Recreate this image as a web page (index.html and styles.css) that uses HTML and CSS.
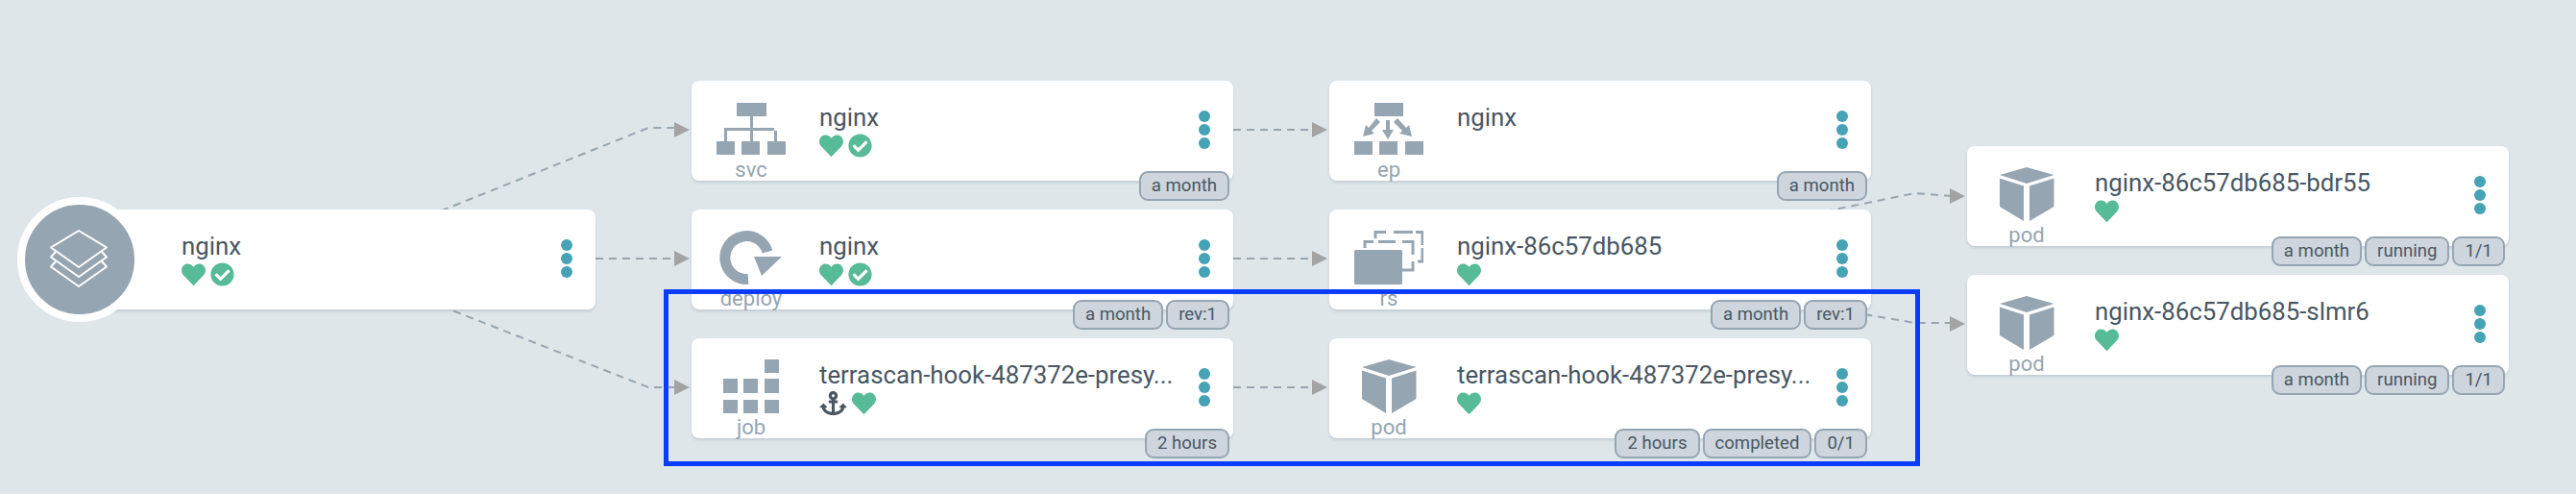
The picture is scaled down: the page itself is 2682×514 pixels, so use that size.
FILE: index.html
```html
<!DOCTYPE html>
<html>
<head>
<meta charset="utf-8">
<title>nginx resource tree</title>
<link rel="stylesheet" href="styles.css">
</head>
<body>
<svg class="defs" width="0" height="0">
  <symbol id="heart" viewBox="0 0 512 512"><path d="M462.3 62.6C407.5 15.9 326 24.3 275.7 76.2L256 96.5l-19.7-20.3C186.1 24.3 104.5 15.9 49.7 62.6c-62.8 53.6-66.1 149.8-9.9 207.9L256 496l216.1-225.5c56.3-58.1 53-154.3-9.8-207.9z"/></symbol>
  <symbol id="check" viewBox="0 0 512 512"><path d="M504 256c0 136.967-111.033 248-248 248S8 392.967 8 256 119.033 8 256 8s248 111.033 248 248zM227.314 387.314l184-184c6.248-6.248 6.248-16.379 0-22.627l-22.627-22.627c-6.248-6.249-16.379-6.249-22.628 0L216 308.118l-70.059-70.059c-6.248-6.248-16.379-6.248-22.628 0l-22.627 22.627c-6.248 6.248-6.248 16.379 0 22.627l104 104c6.249 6.249 16.379 6.249 22.628 0z"/></symbol>
  <symbol id="anchor" viewBox="0 0 576 512"><path d="M12.971 352h32.394C67.172 454.735 181.944 512 288 512c106.229 0 220.853-57.38 242.635-160h32.394c10.691 0 16.045-12.926 8.485-20.485l-67.029-67.029c-4.686-4.686-12.284-4.686-16.971 0l-67.029 67.029c-7.56 7.56-2.206 20.485 8.485 20.485h35.146c-20.29 54.317-84.963 86.588-144.117 94.015V256h52c6.627 0 12-5.373 12-12v-40c0-6.627-5.373-12-12-12h-52v-5.47c37.281-13.178 63.995-48.725 64-90.518C384.005 43.772 341.312.611 289.094.01 235.74-.605 192 42.711 192 96c0 41.798 26.716 77.35 64 90.53V192h-52c-6.627 0-12 5.373-12 12v40c0 6.627 5.373 12 12 12h52v190.015c-58.936-7.399-123.82-39.679-144.117-94.015h35.146c10.691 0 16.045-12.926 8.485-20.485l-67.029-67.029c-4.686-4.686-12.284-4.686-16.971 0L4.485 331.515C-3.074 339.074 2.28 352 12.971 352zM288 64c17.645 0 32 14.355 32 32s-14.355 32-32 32-32-14.355-32-32 14.355-32 32-32z"/></symbol>
  <symbol id="pod" viewBox="0 0 72 56"><path d="M36 0L64.5 8 36 17 8 8zM8 11.500L33 19.500V56L8 41zM64.500 11.500L39 19.500V56L64.500 41z"/></symbol>
</svg>

<div class="canvas">
  <svg class="edges" width="2682" height="514">
    <path d="M420 235L675 133H704"/>
    <path d="M620 269H704"/>
    <path d="M420 303L675 403H704"/>
    <path d="M1284 135H1368"/>
    <path d="M1284 269H1368"/>
    <path d="M1284 403H1368"/>
    <path d="M1900 220L1994 201L2032 204"/>
    <path d="M1900 320L1994 336H2032"/>
    <polygon points="702,127 718,135 702,143"/>
    <polygon points="702,261 718,269 702,277"/>
    <polygon points="702,395 718,403 702,411"/>
    <polygon points="1366,127 1382,135 1366,143"/>
    <polygon points="1366,261 1382,269 1366,277"/>
    <polygon points="1366,395 1382,403 1366,411"/>
    <polygon points="2030,196 2046,204 2030,212"/>
    <polygon points="2030,329 2046,337 2030,345"/>
  </svg>

  <div class="node at-root">
    <div class="kind"></div>
    <div class="info">
      <div class="name">nginx</div>
      <div class="status">
        <svg class="ico"><use href="#heart"/></svg>
        <svg class="ico"><use href="#check"/></svg>
      </div>
    </div>
    <div class="dots"><i></i><i></i><i></i></div>
    <div class="app-icon">
      <svg width="114" height="114" viewBox="0 0 114 114">
        <path d="M56 27L85 44.500 56 65 27 44.500z"/>
        <path d="M32 49L27 54.500 56 75 85 54.500 80 49"/>
        <path d="M32 59L27 64.500 56 85 85 64.500 80 59"/>
      </svg>
    </div>
  </div>

  <div class="node at-svc">
    <div class="kind">
      <svg class="glyph" viewBox="0 0 72 56">
        <path d="M21 1H52V15H21zM35 15H38V27H60V27 30H63V41H60V30H38V41H35V30H11V41H8V27H35zM0 41H19V55H0zM26 41H45V55H26zM53 41H72V55H53z"/>
      </svg>
      <div class="label">svc</div>
    </div>
    <div class="info">
      <div class="name">nginx</div>
      <div class="status">
        <svg class="ico"><use href="#heart"/></svg>
        <svg class="ico"><use href="#check"/></svg>
      </div>
    </div>
    <div class="dots"><i></i><i></i><i></i></div>
    <div class="tags"><span>a month</span></div>
  </div>

  <div class="node at-deploy">
    <div class="kind">
      <svg class="glyph" viewBox="0 0 72 56">
        <path class="ring" d="M33 50.500A22.500 22.500 0 1 1 53 22"/>
        <path d="M39 27H68L47 47z"/>
      </svg>
      <div class="label">deploy</div>
    </div>
    <div class="info">
      <div class="name">nginx</div>
      <div class="status">
        <svg class="ico"><use href="#heart"/></svg>
        <svg class="ico"><use href="#check"/></svg>
      </div>
    </div>
    <div class="dots"><i></i><i></i><i></i></div>
    <div class="tags"><span>a month</span><span>rev:1</span></div>
  </div>

  <div class="node at-job">
    <div class="kind">
      <svg class="glyph" viewBox="0 0 72 56">
        <path d="M50 0H65V14H50zM7 20H22V35H7zM28 20H43V35H28zM50 20H65V35H50zM7 42H22V56H7zM28 42H43V56H28zM50 42H65V56H50z"/>
      </svg>
      <div class="label">job</div>
    </div>
    <div class="info">
      <div class="name">terrascan-hook-487372e-presy...</div>
      <div class="status">
        <svg class="ico anchor"><use href="#anchor"/></svg>
        <svg class="ico"><use href="#heart"/></svg>
      </div>
    </div>
    <div class="dots"><i></i><i></i><i></i></div>
    <div class="tags"><span>2 hours</span></div>
  </div>

  <div class="node at-ep">
    <div class="kind">
      <svg class="glyph" viewBox="0 0 72 56">
        <path d="M21 1H51V15H21zM0 41H19V55H0zM26 41H45V55H26zM53 41H72V55H53z"/>
        <path d="M33 19H37V29H41L35 39 29 29H33zM23 17L27 21 18 30 21 33 9 36 12 24 15 27zM45 17L41 21 50 30 47 33 60 36 57 24 54 27z"/>
      </svg>
      <div class="label">ep</div>
    </div>
    <div class="info">
      <div class="name">nginx</div>
    </div>
    <div class="dots"><i></i><i></i><i></i></div>
    <div class="tags"><span>a month</span></div>
  </div>

  <div class="node at-rs">
    <div class="kind">
      <svg class="glyph" viewBox="0 0 72 56">
        <rect x="0" y="20" width="50" height="36" rx="1.500"/>
        <path d="M11 18V11.500H20M25 11.500H43M50 11.500H61V25M61 32V41H50"/>
        <path d="M22 8V1.500H33M41 1.500H61M64 1.500H71V15M71 18V32H66"/>
      </svg>
      <div class="label">rs</div>
    </div>
    <div class="info">
      <div class="name">nginx-86c57db685</div>
      <div class="status"><svg class="ico"><use href="#heart"/></svg></div>
    </div>
    <div class="dots"><i></i><i></i><i></i></div>
    <div class="tags"><span>a month</span><span>rev:1</span></div>
  </div>

  <div class="node at-hookpod">
    <div class="kind">
      <svg class="glyph"><use href="#pod"/></svg>
      <div class="label">pod</div>
    </div>
    <div class="info">
      <div class="name">terrascan-hook-487372e-presy...</div>
      <div class="status"><svg class="ico"><use href="#heart"/></svg></div>
    </div>
    <div class="dots"><i></i><i></i><i></i></div>
    <div class="tags"><span>2 hours</span><span>completed</span><span>0/1</span></div>
  </div>

  <div class="node at-pod1">
    <div class="kind">
      <svg class="glyph"><use href="#pod"/></svg>
      <div class="label">pod</div>
    </div>
    <div class="info">
      <div class="name">nginx-86c57db685-bdr55</div>
      <div class="status"><svg class="ico"><use href="#heart"/></svg></div>
    </div>
    <div class="dots"><i></i><i></i><i></i></div>
    <div class="tags"><span>a month</span><span>running</span><span>1/1</span></div>
  </div>

  <div class="node at-pod2">
    <div class="kind">
      <svg class="glyph"><use href="#pod"/></svg>
      <div class="label">pod</div>
    </div>
    <div class="info">
      <div class="name">nginx-86c57db685-slmr6</div>
      <div class="status"><svg class="ico"><use href="#heart"/></svg></div>
    </div>
    <div class="dots"><i></i><i></i><i></i></div>
    <div class="tags"><span>a month</span><span>running</span><span>1/1</span></div>
  </div>

  <div class="highlight"></div>
</div>
</body>
</html>
```

FILE: styles.css
```css
body {
  margin: 0;
  background: #dee6ea;
  font-family: Roboto, "Liberation Sans", sans-serif;
  overflow: hidden;
}

.defs {
  position: absolute;
}

.canvas {
  position: relative;
  width: 2682px;
  height: 514px;
}

.edges {
  position: absolute;
  left: 0;
  top: 0;
}

.edges path {
  fill: none;
  stroke: #98a5b0;
  stroke-width: 2;
  stroke-dasharray: 8 6;
}

.edges polygon {
  fill: #a3a3a3;
}

/* nodes sit on the graph canvas */
.node {
  position: absolute;
  display: flex;
  width: 564px;
  height: 104px;
  background: #fff;
  border-radius: 8px;
  box-shadow: 0 2px 3px rgba(70, 90, 110, .18);
}

.at-root { left: 56px; top: 218px; }
.at-svc { left: 720px; top: 84px; }
.at-deploy { left: 720px; top: 218px; }
.at-job { left: 720px; top: 352px; }
.at-ep { left: 1384px; top: 84px; }
.at-rs { left: 1384px; top: 218px; }
.at-hookpod { left: 1384px; top: 352px; }
.at-pod1 { left: 2048px; top: 152px; }
.at-pod2 { left: 2048px; top: 286px; }

.kind {
  flex: none;
  width: 124px;
  padding-top: 22px;
  text-align: center;
  box-sizing: border-box;
}

.glyph {
  display: block;
  width: 72px;
  height: 56px;
  margin: 0 auto;
  fill: #95a5b2;
}

.glyph .ring {
  fill: none;
  stroke: #95a5b2;
  stroke-width: 11;
}

.at-rs .glyph path {
  fill: none;
  stroke: #95a5b2;
  stroke-width: 3;
}

.label {
  margin-top: 3px;
  font-size: 22px;
  line-height: 24px;
  color: #95a5b2;
}

.info {
  margin-left: 9px;
  padding-top: 23px;
}

.name {
  font-size: 25.8px;
  line-height: 30px;
  color: #495763;
  white-space: nowrap;
}

.status {
  display: flex;
  gap: 5px;
  margin-top: 2px;
}

.ico {
  width: 25px;
  height: 25px;
  fill: #58bb97;
}

.ico.anchor {
  width: 29px;
  fill: #495763;
}

.dots {
  margin: 0 24px 2px auto;
  align-self: center;
  display: flex;
  flex-direction: column;
  gap: 2px;
}

.dots i {
  display: block;
  width: 12px;
  height: 12px;
  border-radius: 50%;
  background: #46a2b5;
}

.tags {
  position: absolute;
  right: 4px;
  bottom: -21px;
  display: flex;
  gap: 3px;
}

.tags span {
  height: 31px;
  padding: 0 11px;
  box-sizing: border-box;
  border: 2px solid #95a5b2;
  border-radius: 9px;
  background: #ced5dd;
  font-size: 18.6px;
  line-height: 27px;
  color: #495763;
}

.app-icon {
  position: absolute;
  left: -38px;
  top: -13px;
  width: 114px;
  height: 114px;
  border: 8px solid #fff;
  border-radius: 50%;
  background: #95a5b2;
}

.app-icon svg {
  display: block;
  fill: none;
  stroke: #fff;
  stroke-width: 2;
  stroke-linejoin: round;
}

.highlight {
  position: absolute;
  left: 691px;
  top: 301px;
  width: 1298px;
  height: 174px;
  border: 5px solid #0a3cff;
}
```
